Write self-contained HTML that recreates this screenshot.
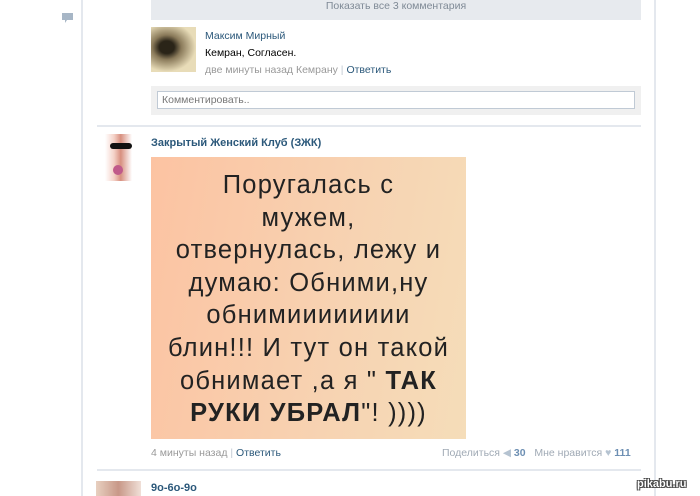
<!DOCTYPE html>
<html><head><meta charset="utf-8"><style>
body{margin:0;width:700px;height:496px;overflow:hidden;background:#fff;font-family:"Liberation Sans",sans-serif;font-size:11px;position:relative}
.a{position:absolute}
.blue{color:#2b587a}
.gray{color:#999}
</style></head><body>
<div class="a" style="left:81px;top:0;width:2px;height:496px;background:#e4e8ee"></div>
<div class="a" style="left:654px;top:0;width:2px;height:496px;background:#e4e8ee"></div>
<svg class="a" style="left:62px;top:13px" width="11" height="11" viewBox="0 0 11 11"><path d="M0 0H11V7H5L3 10V7H0Z" fill="#a7b6c6"/></svg>
<div class="a" style="left:151px;top:0;width:490px;height:20px;background:#e7eaee;color:#7f8a96;text-align:center;line-height:13px;font-size:10.5px">Показать все 3 комментария</div>
<div class="a" style="left:151px;top:27px;width:45px;height:45px;background:radial-gradient(ellipse at 35% 45%,#2a2418 0 18%,#8a7a5a 35%,#e8dcb8 70%)"></div>
<div class="a blue" style="left:205px;top:30px;font-size:10.5px">Максим Мирный</div>
<div class="a" style="left:205px;top:47px;font-size:10.5px;color:#000">Кемран, Согласен.</div>
<div class="a" style="left:205px;top:64px;font-size:10.5px"><span class="gray">две минуты назад Кемрану</span> <span style="color:#c0c8d2">|</span> <span class="blue">Ответить</span></div>
<div class="a" style="left:151px;top:86px;width:490px;height:29px;background:#f0f0f0"></div>
<div class="a" style="left:157px;top:91px;width:476px;height:16px;background:#fff;border:1px solid #c0cad5;font-size:10.5px;color:#777;line-height:16px;text-indent:4px">Комментировать..</div>
<div class="a" style="left:97px;top:125px;width:544px;height:2px;background:#e4e8ee"></div>
<div class="a" style="left:96px;top:134px;width:45px;height:47px;background:linear-gradient(90deg,#fff 20%,#f4d2c8 40%,#d89080 55%,#fff 80%)"></div>
<div class="a" style="left:110px;top:143px;width:22px;height:6px;background:#111;border-radius:3px"></div>
<div class="a" style="left:113px;top:165px;width:10px;height:10px;background:#c05a8a;border-radius:50%"></div>
<div class="a blue" style="left:151px;top:137px;font-weight:bold;font-size:11px">Закрытый Женский Клуб (ЗЖК)</div>
<div class="a" style="left:151px;top:157px;width:315px;height:282px;background:linear-gradient(100deg,#fcc3a2,#f7d3b2 60%,#f5ddb9);text-align:center;font-size:25.5px;line-height:32.6px;color:#222;padding-top:12px;box-sizing:border-box;letter-spacing:1.2px;white-space:nowrap">Поругалась с<br>мужем,<br>отвернулась, лежу и<br>думаю: Обними,ну<br>обнимииииииии<br>блин!!! И тут он такой<br>обнимает ,а я " <b>ТАК</b><br><b>РУКИ УБРАЛ</b>"! ))))</div>
<div class="a" style="left:151px;top:447px;font-size:10.5px"><span class="gray">4 минуты назад</span> <span style="color:#c0c8d2">|</span> <span class="blue">Ответить</span></div>
<div class="a" style="left:442px;top:447px;font-size:10.5px"><span style="color:#a0aab5">Поделиться</span> <span style="color:#b5c3d1">◀</span> <b style="color:#6d8fb3">30</b> &nbsp; <span style="color:#a0aab5">Мне нравится</span> <span style="color:#b5c3d1">♥</span> <b style="color:#6d8fb3">111</b></div>
<div class="a" style="left:97px;top:469px;width:544px;height:2px;background:#e4e8ee"></div>
<div class="a" style="left:96px;top:481px;width:45px;height:15px;background:linear-gradient(90deg,#e8d0c0,#c89888,#f0e0d8)"></div>
<div class="a blue" style="left:151px;top:482px;font-weight:bold;font-size:11px">9о-6о-9о</div>
<div class="a" style="left:637px;top:478px;font-size:11px;color:#fff;font-weight:bold;text-shadow:0 0 1px #000,1px 1px 0 #555,-1px -1px 0 #555,1px -1px 0 #555,-1px 1px 0 #555">pikabu.ru</div>
</body></html>
